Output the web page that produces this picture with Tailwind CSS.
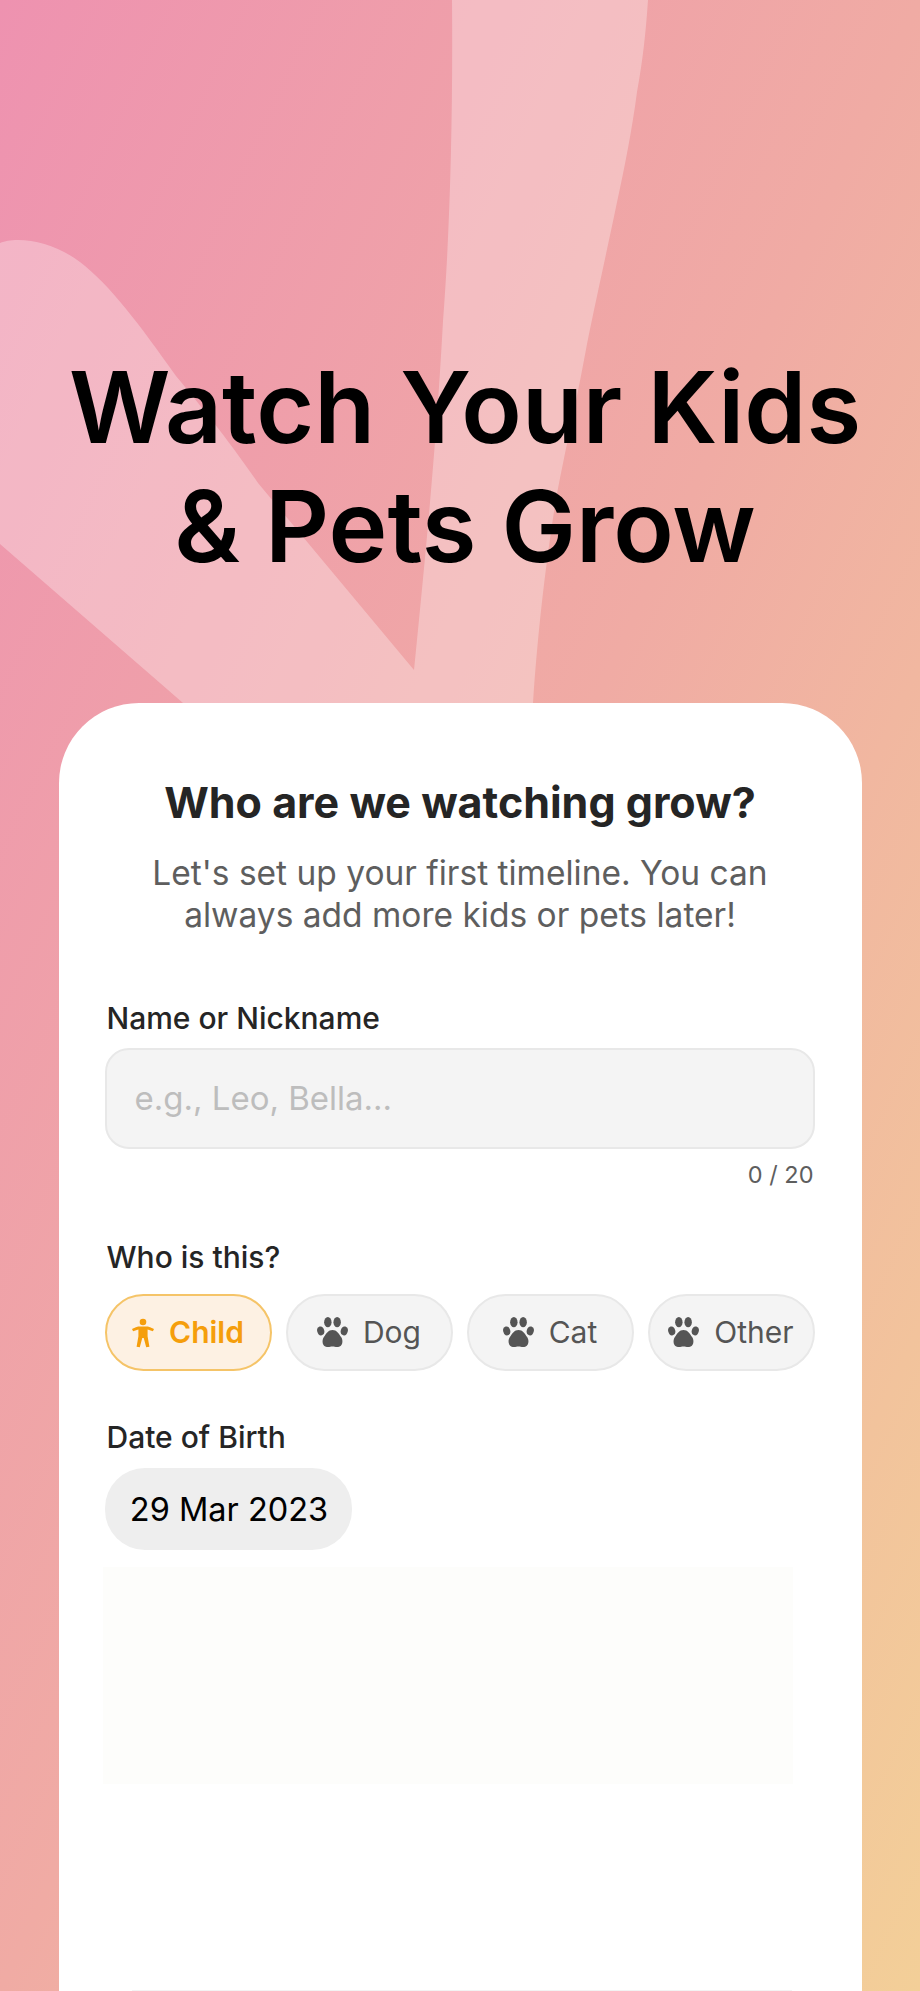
<!doctype html>
<html><head><meta charset="utf-8"><script src="https://cdn.jsdelivr.net/npm/@tailwindcss/browser@4"></script></head>
<body class="m-0">
<div class="relative w-[920px] h-[1991px] overflow-hidden bg-[linear-gradient(to_bottom_right,#ee92b0_0%,#f0aba4_50%,#f3cf98_100%)] font-['Inter',sans-serif]">
  <svg class="absolute left-0 top-0" width="920" height="720" viewBox="0 0 920 720" fill="#fff" fill-opacity="0.3">
    <path d="M452 0 C453 120 450 230 443 321 C436 450 425 560 414 670 L258 483 C225 435 200 405 176 376 C140 325 110 285 80 262 C60 247 38 240 18 240 C10 240 5 241 0 243 L0 544 L183 703 L533 703 C538 630 545 570 555 505 C565 450 575 410 587 344 C597 295 606 255 616 207 C625 165 632 130 637 92 C643 60 646 30 648 0 Z"/>
  </svg>
  <div class="relative flex flex-col items-center">
    <h1 class="mt-[348px] h-[355px] pl-[10px] text-center text-[99.5px] leading-[119px] font-semibold text-black">Watch Your Kids<br>&amp; Pets Grow</h1>
    <div class="w-[803px] h-[1288px] bg-white rounded-t-[80px] pt-[71px] px-[47px]">
      <h2 class="text-center text-[43px] leading-[56px] font-bold text-[#252525]">Who are we watching grow?</h2>
      <p class="mt-[22px] text-center text-[33.5px] leading-[42px] text-[#5e5e5e]">Let's set up your first timeline. You can<br>always add more kids or pets later!</p>
      <label class="block mt-[62px] text-[30px] leading-[40px] font-medium text-[#252525] pl-[1px]">Name or Nickname</label>
      <div class="-ml-[1px] mt-[10px] h-[101px] w-[710px] rounded-[24px] border-2 border-[#e8e8e8] bg-[#f4f4f4] pl-[28px] flex items-center text-[33px] text-[#bdbdbd]">e.g., Leo, Bella...</div>
      <div class="mt-[10px] w-[708px] text-right text-[23.5px] leading-[32px] text-[#5e5e5e]">0 / 20</div>
      <label class="block mt-[46px] text-[30px] leading-[40px] font-medium text-[#252525] pl-[1px]">Who is this?</label>
      <div class="-ml-[1px] mt-[17px] w-[710px] flex gap-[14px]">
        <div class="flex-1 h-[77px] rounded-full border-2 border-[#f5c468] bg-[#fdf1e3] flex items-center justify-center gap-[15px] text-[30px] font-semibold text-[#f59e0b]">
          <svg width="22" height="30" viewBox="0 0 24 32" fill="#f59e0b"><circle cx="12" cy="4" r="3.6"/><path d="M8 9 L16 9 C18 9 19 9.5 24 11.5 L22.8 14 L17 12.3 L17 19.5 L19 31 L15.5 31.5 L12.8 21.5 L11.2 21.5 L8.5 31.5 L5 31 L7 19.5 L7 12.3 L1.2 14 L0 11.5 C5 9.5 6 9 8 9 Z"/></svg>
          Child</div>
        <div class="flex-1 h-[77px] rounded-full border-2 border-[#e8e8e8] bg-[#f4f4f4] flex items-center justify-center gap-[15px] text-[30px] text-[#555555]">
          <svg width="31" height="31" viewBox="0 0 30 30" fill="#555555"><ellipse cx="3.6" cy="13.5" rx="3.4" ry="4.4" transform="rotate(-15 3.6 13.5)"/><ellipse cx="10.5" cy="5" rx="3.6" ry="5"/><ellipse cx="19.5" cy="5" rx="3.6" ry="5"/><ellipse cx="26.4" cy="13.5" rx="3.4" ry="4.4" transform="rotate(15 26.4 13.5)"/><path d="M15 12.5 C19 12.5 21 16 23.5 19.5 C25.5 22.5 25 28.5 20.5 29 C18 29.3 17 28.5 15 28.5 C13 28.5 12 29.3 9.5 29 C5 28.5 4.5 22.5 6.5 19.5 C9 16 11 12.5 15 12.5 Z"/></svg>
          Dog</div>
        <div class="flex-1 h-[77px] rounded-full border-2 border-[#e8e8e8] bg-[#f4f4f4] flex items-center justify-center gap-[15px] text-[30px] text-[#555555]">
          <svg width="31" height="31" viewBox="0 0 30 30" fill="#555555"><ellipse cx="3.6" cy="13.5" rx="3.4" ry="4.4" transform="rotate(-15 3.6 13.5)"/><ellipse cx="10.5" cy="5" rx="3.6" ry="5"/><ellipse cx="19.5" cy="5" rx="3.6" ry="5"/><ellipse cx="26.4" cy="13.5" rx="3.4" ry="4.4" transform="rotate(15 26.4 13.5)"/><path d="M15 12.5 C19 12.5 21 16 23.5 19.5 C25.5 22.5 25 28.5 20.5 29 C18 29.3 17 28.5 15 28.5 C13 28.5 12 29.3 9.5 29 C5 28.5 4.5 22.5 6.5 19.5 C9 16 11 12.5 15 12.5 Z"/></svg>
          Cat</div>
        <div class="flex-1 h-[77px] rounded-full border-2 border-[#e8e8e8] bg-[#f4f4f4] flex items-center justify-center gap-[15px] text-[30px] text-[#555555]">
          <svg width="31" height="31" viewBox="0 0 30 30" fill="#555555"><ellipse cx="3.6" cy="13.5" rx="3.4" ry="4.4" transform="rotate(-15 3.6 13.5)"/><ellipse cx="10.5" cy="5" rx="3.6" ry="5"/><ellipse cx="19.5" cy="5" rx="3.6" ry="5"/><ellipse cx="26.4" cy="13.5" rx="3.4" ry="4.4" transform="rotate(15 26.4 13.5)"/><path d="M15 12.5 C19 12.5 21 16 23.5 19.5 C25.5 22.5 25 28.5 20.5 29 C18 29.3 17 28.5 15 28.5 C13 28.5 12 29.3 9.5 29 C5 28.5 4.5 22.5 6.5 19.5 C9 16 11 12.5 15 12.5 Z"/></svg>
          Other</div>
      </div>
      <label class="block mt-[46px] text-[30px] leading-[40px] font-medium text-[#252525] pl-[1px]">Date of Birth</label>
      <div class="-ml-[1px] mt-[11px] w-[247px] h-[82px] pt-[2px] pl-[2px] rounded-[40px] bg-[#eeeeee] flex items-center justify-center text-[32.5px] text-black">29 Mar 2023</div>
      <div class="-ml-[3px] mt-[17px] w-[690px] h-[217px] bg-[#fdfdfb]"></div>
      <div class="ml-[26px] mt-[206px] w-[660px] h-[1px] bg-[#f3f3f3]"></div>
    </div>
  </div>
</div>
</body></html>
